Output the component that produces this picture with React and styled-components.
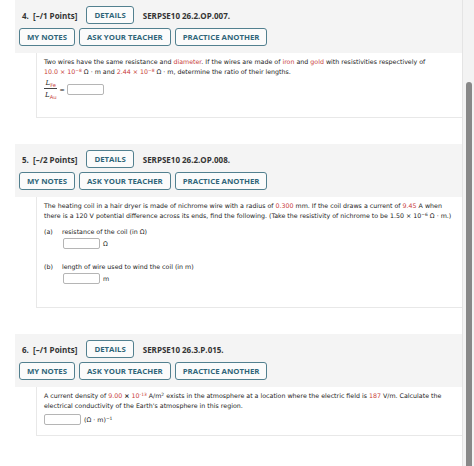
import React from "react";
import styled, { createGlobalStyle } from "styled-components";

const GlobalStyle = createGlobalStyle`
  body {
    margin: 0;
    background: #fff;
    font-family: "Open Sans", "DejaVu Sans", sans-serif;
  }
`;

const Red = styled.span`
  color: #c8403a;
`;

const Sup = styled.sup`
  font-size: 0.7em;
  vertical-align: 0.5em;
  line-height: 0;
`;

const App = () => {
  return (
    <Page>
      <GlobalStyle />
      <Main>
        <Question
          num="4."
          points="[–/1 Points]"
          code="SERPSE10 26.2.OP.007."
          pb={18}
        >
          <Text>
            Two wires have the same resistance and <Red>diameter</Red>. If the
            wires are made of <Red>iron</Red> and <Red>gold</Red> with
            resistivities respectively of
            <br />
            <Red>
              10.0 × 10<Sup>−8</Sup>
            </Red>{" "}
            Ω · m and{" "}
            <Red>
              2.44 × 10<Sup>−8</Sup>
            </Red>{" "}
            Ω · m, determine the ratio of their lengths.
          </Text>
          <FractionRow>
            <Fraction>
              <Num>
                L<Sub>Fe</Sub>
              </Num>
              <Den>
                L<Sub>Au</Sub>
              </Den>
            </Fraction>
            <span>=</span>
            <Input />
          </FractionRow>
        </Question>

        <Question
          num="5."
          points="[–/2 Points]"
          code="SERPSE10 26.2.OP.008."
          pb={23}
        >
          <Text>
            The heating coil in a hair dryer is made of nichrome wire with a
            radius of <Red>0.300</Red> mm. If the coil draws a current of{" "}
            <Red>9.45</Red> A when
            <br />
            there is a 120 V potential difference across its ends, find the
            following. (Take the resistivity of nichrome to be 1.50 × 10
            <Sup>−6</Sup> Ω · m.)
          </Text>
          <Part>
            <PartLabel>(a)</PartLabel>
            <span>resistance of the coil (in Ω)</span>
          </Part>
          <AnswerRow indent={19}>
            <Input />
            <Unit>Ω</Unit>
          </AnswerRow>
          <Part gap={14}>
            <PartLabel>(b)</PartLabel>
            <span>length of wire used to wind the coil (in m)</span>
          </Part>
          <AnswerRow indent={19}>
            <Input />
            <Unit>m</Unit>
          </AnswerRow>
        </Question>

        <Question
          num="6."
          points="[–/1 Points]"
          code="SERPSE10 26.3.P.015."
          pb={10}
        >
          <Text>
            A current density of <Red>9.00</Red> <b>×</b>{" "}
            <Red>
              10<Sup>-13</Sup>
            </Red>{" "}
            A/m<Sup>2</Sup> exists in the atmosphere at a location where the
            electric field is <Red>187</Red> V/m. Calculate the
            <br />
            electrical conductivity of the Earth's atmosphere in this region.
          </Text>
          <AnswerRow>
            <Input />
            <Unit>
              (Ω · m)<Sup>−1</Sup>
            </Unit>
          </AnswerRow>
        </Question>
      </Main>
      <ScrollTrack>
        <ScrollThumb />
      </ScrollTrack>
    </Page>
  );
};

const Question = ({ num, points, code, pb, children }) => (
  <Block>
    <Header>
      <TitleRow>
        <Title>
          {num}&nbsp; {points}
        </Title>
        <Button>DETAILS</Button>
        <Title>{code}</Title>
      </TitleRow>
      <ButtonRow>
        <Button>MY NOTES</Button>
        <Button>ASK YOUR TEACHER</Button>
        <Button>PRACTICE ANOTHER</Button>
      </ButtonRow>
    </Header>
    <Body pb={pb}>{children}</Body>
  </Block>
);

export default App;

const Page = styled.div`
  display: flex;
  height: 466px;
  overflow: hidden;
`;

const Main = styled.div`
  flex: 1;
  padding-left: 15px;
`;

const ScrollTrack = styled.div`
  width: 11px;
  background: #f3f3f3;
  border-left: 1px solid #e4e4e4;
  display: flex;
  flex-direction: column;
  align-items: center;
`;

const ScrollThumb = styled.div`
  margin-top: 82px;
  width: 6px;
  flex: 1;
  background: #888;
  border-radius: 3px 3px 0 0;
`;

const Block = styled.div`
  margin-bottom: 26px;
`;

const Header = styled.div`
  background: #f4f4f4;
  height: 53px;
  box-sizing: border-box;
  padding: 6px 4px 0 4px;
`;

const TitleRow = styled.div`
  display: flex;
  align-items: center;
  gap: 9px;
  padding-left: 3px;
`;

const Title = styled.span`
  font-size: 8px;
  font-weight: 700;
  color: #333;
  white-space: nowrap;
`;

const ButtonRow = styled.div`
  display: flex;
  gap: 4px;
  margin-top: 4px;
`;

const Button = styled.button`
  height: 18px;
  padding: 0 7px;
  border: 1.5px solid #52808f;
  border-radius: 3px;
  background: #fbfbfb;
  color: #2f6579;
  font-family: "Open Sans", sans-serif;
  font-size: 7.8px;
  font-weight: 700;
  white-space: nowrap;
`;

const Body = styled.div`
  margin-left: 21px;
  background: #fff;
  border-left: 1px solid #e8e8e8;
  border-bottom: 1px solid #e8e8e8;
  padding: 4px 7px ${(p) => p.pb}px;
  font-family: "DejaVu Sans", sans-serif;
  font-size: 6.3px;
  color: #222;
`;

const Text = styled.div`
  line-height: 9.6px;
  white-space: nowrap;
`;

const FractionRow = styled.div`
  display: flex;
  align-items: center;
  gap: 2px;
  margin-top: 3px;
`;

const Fraction = styled.div`
  display: flex;
  flex-direction: column;
  align-items: center;
  font-family: "DejaVu Serif", serif;
  font-style: italic;
  font-size: 7px;
`;

const Num = styled.div`
  padding: 0 1px 1px;
  border-bottom: 0.8px solid #444;
`;

const Den = styled.div`
  padding: 2px 1px 0;
`;

const Sub = styled.sub`
  color: #c8403a;
  font-style: normal;
  font-family: "DejaVu Sans", sans-serif;
  font-size: 0.75em;
  vertical-align: -0.4em;
  line-height: 0;
`;

const Input = styled.div`
  width: 37px;
  height: 11px;
  box-sizing: border-box;
  border: 1px solid #b5b5b5;
  border-radius: 2px;
  background: #fff;
`;

const Part = styled.div`
  display: flex;
  gap: 8px;
  margin-top: ${(p) => p.gap || 8}px;
`;

const PartLabel = styled.span`
  width: 10px;
`;

const AnswerRow = styled.div`
  display: flex;
  align-items: center;
  gap: 3px;
  margin-top: 3px;
  margin-left: ${(p) => p.indent || 0}px;
`;

const Unit = styled.span`
  white-space: nowrap;
`;
